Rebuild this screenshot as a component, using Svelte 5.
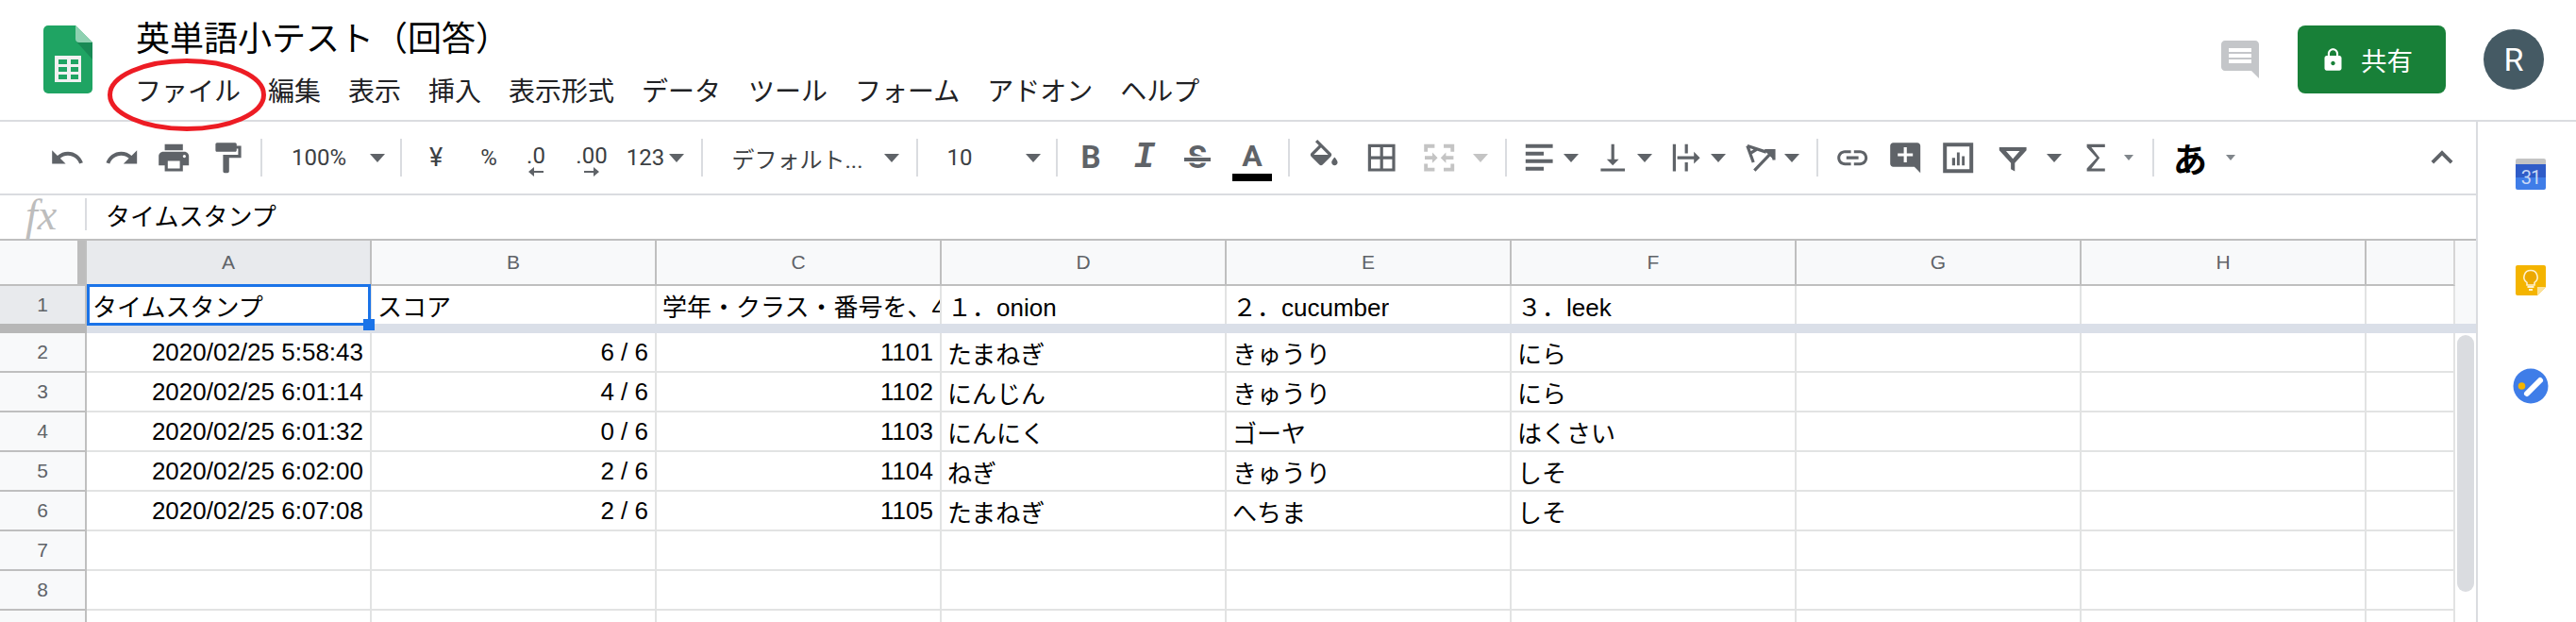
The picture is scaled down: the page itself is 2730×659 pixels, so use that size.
<svelte:options runes={true} />

<script lang="ts">
  const paths = {
    undo: 'M12.5 8c-2.65 0-5.05.99-6.9 2.6L2 7v9h9l-3.62-3.62c1.39-1.16 3.16-1.88 5.12-1.88 3.54 0 6.55 2.31 7.6 5.5l2.37-.78C21.08 11.03 17.15 8 12.5 8z',
    redo: 'M18.4 10.6C16.55 8.99 14.15 8 11.5 8c-4.65 0-8.58 3.03-9.96 7.22L3.9 16c1.05-3.19 4.05-5.5 7.6-5.5 1.95 0 3.73.72 5.12 1.88L13 16h9V7l-3.6 3.6z',
    print: 'M19 8H5c-1.66 0-3 1.34-3 3v6h4v4h12v-4h4v-6c0-1.66-1.34-3-3-3zm-3 11H8v-5h8v5zm3-7c-.55 0-1-.45-1-1s.45-1 1-1 1 .45 1 1-.45 1-1 1zm-1-9H6v4h12V3z',
    paint: 'M18 4V3c0-.55-.45-1-1-1H5c-.55 0-1 .45-1 1v4c0 .55.45 1 1 1h12c.55 0 1-.45 1-1V6h1v4H9v11c0 .55.45 1 1 1h2c.55 0 1-.45 1-1v-9h8V4h-3z',
    fill: 'M16.56 8.94L7.62 0 6.21 1.41l2.38 2.38-5.15 5.15c-.59.59-.59 1.54 0 2.12l5.5 5.5c.29.29.68.44 1.06.44s.77-.15 1.06-.44l5.5-5.5c.59-.58.59-1.53 0-2.12zM5.21 10L10 5.21 14.79 10H5.21zM19 11.5s-2 2.17-2 3.5c0 1.1.9 2 2 2s2-.9 2-2c0-1.33-2-3.5-2-3.5z',
    borders: 'M3 3v18h18V3H3zm8 16H5v-6h6v6zm0-8H5V5h6v6zm8 8h-6v-6h6v6zm0-8h-6V5h6v6z',
    merge: 'M2 3h7v2.400H4.400V8H2zM22 3h-7v2.400h4.600V8H22zM2 21h7v-2.400H4.400V16H2zM22 21h-7v-2.400h4.600V16H22zM2.500 10.800h5V8.500l3.500 3.500-3.500 3.500v-2.300h-5zM21.500 10.800h-5V8.500L13 12l3.500 3.500v-2.300h5z',
    halign: 'M3 3h18v2.500H3zM3 8h12v2.500H3zM3 13h18v2.500H3zM3 18h12v2.500H3z',
    valign: 'M16 13h-3V3h-2v10H8l4 4 4-4zM4 19v2h16v-2H4z',
    wrap: 'M3 3h2v18H3zM11 3h2v6h-2zM11 15h2v6h-2zM6 11h11V8l4 4-4 4v-3H6z',
    link: 'M3.900 12c0-1.710 1.390-3.100 3.100-3.100h4V7H7c-2.760 0-5 2.240-5 5s2.240 5 5 5h4v-1.900H7c-1.710 0-3.100-1.390-3.100-3.100zM8 13h8v-2H8v2zm9-6h-4v1.900h4c1.710 0 3.100 1.390 3.100 3.100s-1.390 3.100-3.100 3.100h-4V17h4c2.760 0 5-2.240 5-5s-2.240-5-5-5z',
    comment: 'M21.990 4c0-1.100-.890-2-1.990-2H4c-1.100 0-2 .900-2 2v12c0 1.100.900 2 2 2h14l4 4-.010-18zM17 11h-4v4h-2v-4H7V9h4V5h2v4h4v2z',
    chart: 'M2 2h20v20H2zM4.500 4.500v15h15v-15zM8 12h2v5H8zM11.200 8.500h1.800V17h-1.800zM14.500 11h1.800v6h-1.800z',
    filter: 'M3 5h18v2L13.300 15.500V21L10.700 19.500V15.500L3 7zM7.500 7.500L12 12.700 16.500 7.500z',
    sigma: 'M18 3H6v2l6.500 7L6 19v2h12v-2H9l5.500-7L9 5h9z',
    chevron: 'M12 8l-6 6 1.410 1.410L12 10.830l4.590 4.580L18 14z'
  };

  const raw = [
    { k: 'icon', d: 'undo', at: 71, w: 38 },
    { k: 'icon', d: 'redo', at: 129, w: 38 },
    { k: 'icon', d: 'print', at: 184, w: 38 },
    { k: 'icon', d: 'paint', at: 241, w: 38 },
    { k: 'sep', at: 277, w: 2 },
    { k: 'text', t: '100%', at: 338, w: 60 },
    { k: 'caret', at: 400, w: 16 },
    { k: 'sep', at: 425, w: 2 },
    { k: 'text', t: '¥', at: 462, w: 24, cls: 'big' },
    { k: 'text', t: '%', at: 518, w: 24 },
    { k: 'dec', t: '.0', at: 568, w: 40, dir: 'l' },
    { k: 'dec', t: '.00', at: 627, w: 40, dir: 'r' },
    { k: 'text', t: '123', at: 684, w: 40 },
    { k: 'caret', at: 717, w: 16 },
    { k: 'sep', at: 744, w: 2 },
    { k: 'text', t: 'デフォルト...', at: 845, w: 140 },
    { k: 'caret', at: 945, w: 16 },
    { k: 'sep', at: 972, w: 2 },
    { k: 'text', t: '10', at: 1017, w: 30 },
    { k: 'caret', at: 1095, w: 16 },
    { k: 'sep', at: 1120, w: 2 },
    { k: 'fmt', t: 'B', at: 1156, w: 30, cls: 'bold' },
    { k: 'fmt', t: 'I', at: 1213, w: 30, cls: 'ital' },
    { k: 'fmt', t: 'S', at: 1269, w: 30, cls: 'bold strike' },
    { k: 'color', t: 'A', at: 1327, w: 42 },
    { k: 'sep', at: 1366, w: 2 },
    { k: 'icon', d: 'fill', at: 1403, w: 38 },
    { k: 'icon', d: 'borders', at: 1464, w: 38 },
    { k: 'icon', d: 'merge', at: 1525, w: 38, off: true },
    { k: 'caret', at: 1569, w: 16, off: true },
    { k: 'sep', at: 1596, w: 2 },
    { k: 'icon', d: 'halign', at: 1631, w: 38 },
    { k: 'caret', at: 1665, w: 16 },
    { k: 'icon', d: 'valign', at: 1709, w: 38 },
    { k: 'caret', at: 1743, w: 16 },
    { k: 'icon', d: 'wrap', at: 1787, w: 38 },
    { k: 'caret', at: 1821, w: 16 },
    { k: 'rotate', at: 1866, w: 38 },
    { k: 'caret', at: 1899, w: 16 },
    { k: 'sep', at: 1926, w: 2 },
    { k: 'icon', d: 'link', at: 1963, w: 38 },
    { k: 'icon', d: 'comment', at: 2019, w: 38 },
    { k: 'icon', d: 'chart', at: 2075, w: 38 },
    { k: 'icon', d: 'filter', at: 2133, w: 38 },
    { k: 'caret', at: 2177, w: 16 },
    { k: 'icon', d: 'sigma', at: 2221, w: 38 },
    { k: 'caret', at: 2256, w: 10, small: true },
    { k: 'sep', at: 2282, w: 2 },
    { k: 'text', t: 'あ', at: 2321, w: 38, cls: 'kana' },
    { k: 'caret', at: 2364, w: 10, small: true },
    { k: 'icon', d: 'chevron', at: 2588, w: 46 }
  ];

  // gap before each item follows from its centre and the previous item's right edge
  let edge = 0;
  const items = raw.map((it) => {
    const left = it.at - it.w / 2;
    const gap = left - edge;
    edge = left + it.w;
    return { ...it, gap };
  });

  const menus = ['ファイル', '編集', '表示', '挿入', '表示形式', 'データ', 'ツール', 'フォーム', 'アドオン', 'ヘルプ'];
  const cols = ['A', 'B', 'C', 'D', 'E', 'F', 'G', 'H', ''];
  const head = ['タイムスタンプ', 'スコア', '学年・クラス・番号を、4桁の半角数字で入力してください', '１．onion', '２．cucumber', '３．leek', '', '', ''];
  const rows = [
    ['2020/02/25 5:58:43', '6 / 6', '1101', 'たまねぎ', 'きゅうり', 'にら'],
    ['2020/02/25 6:01:14', '4 / 6', '1102', 'にんじん', 'きゅうり', 'にら'],
    ['2020/02/25 6:01:32', '0 / 6', '1103', 'にんにく', 'ゴーヤ', 'はくさい'],
    ['2020/02/25 6:02:00', '2 / 6', '1104', 'ねぎ', 'きゅうり', 'しそ'],
    ['2020/02/25 6:07:08', '2 / 6', '1105', 'たまねぎ', 'へちま', 'しそ'],
    ['', '', '', '', '', ''],
    ['', '', '', '', '', ''],
    ['', '', '', '', '', '']
  ];
</script>

<div class="app">
  <header class="top">
    <svg class="logo" viewBox="0 0 52 72">
      <path d="M5 0h29l18 18v49a5 5 0 0 1-5 5H5a5 5 0 0 1-5-5V5a5 5 0 0 1 5-5z" fill="#1fa463" />
      <path d="M34 16l18 20V18z" fill="#188a55" />
      <path d="M34 0l18 18H38a4 4 0 0 1-4-4z" fill="#8ed1b1" />
      <path d="M12 32h28v28H12z" fill="#f1f1f1" />
      <path d="M16 36h9v5h-9zM29 36h8v5h-8zM16 44h9v5h-9zM29 44h8v5h-8zM16 52h9v5h-9zM29 52h8v5h-8z" fill="#1fa463" />
    </svg>
    <div class="titles">
      <div class="title">英単語小テスト（回答）</div>
      <nav class="menu">
        {#each menus as m}
          <span>{m}</span>
        {/each}
      </nav>
    </div>
    <div class="actions">
      <svg class="notes" viewBox="0 0 24 24"><path d="M20 2H4c-1.100 0-2 .900-2 2v12c0 1.100.900 2 2 2h14l4 4V4c0-1.100-.900-2-2-2zm-2 12H6v-2h12v2zm0-3H6V9h12v2zm0-3H6V6h12v2z" /></svg>
      <button class="share">
        <svg viewBox="0 0 24 24"><path d="M18 8h-1V6c0-2.760-2.240-5-5-5S7 3.240 7 6v2H6c-1.100 0-2 .900-2 2v10c0 1.100.900 2 2 2h12c1.100 0 2-.900 2-2V10c0-1.100-.900-2-2-2zm-6 9c-1.100 0-2-.900-2-2s.900-2 2-2 2 .900 2 2-.900 2-2 2zm3.100-9H8.900V6c0-1.710 1.390-3.100 3.100-3.100 1.710 0 3.100 1.390 3.100 3.100v2z" /></svg>
        共有
      </button>
      <div class="avatar">R</div>
    </div>
  </header>

  <div class="body">
    <div class="work">
      <div class="toolbar">
        {#each items as it}
          <div class="slot" style="margin-left:{it.gap}px;width:{it.w}px">
            {#if it.k === 'icon'}
              <svg class="ico" class:off={it.off} class:wide={it.d === 'chevron'} viewBox="0 0 24 24"><path fill-rule="evenodd" d={paths[it.d]} /></svg>
            {:else if it.k === 'rotate'}
              <svg class="ico" viewBox="0 0 24 24" fill="none" stroke="#5f6368" stroke-width="2">
                <path d="M3 4l4 11M3 4l12.500 4.200M4.800 9.200L9.800 6" />
                <path d="M7.700 20.400L19.500 8M14.500 7.300H20.600V13.500" />
              </svg>
            {:else if it.k === 'sep'}
              <div class="sep"></div>
            {:else if it.k === 'caret'}
              <div class="caret" class:off={it.off} class:small={it.small}></div>
            {:else if it.k === 'text'}
              <span class="txt {it.cls ?? ''}">{it.t}</span>
            {:else if it.k === 'dec'}
              <div class="dec">
                <span>{it.t}</span>
                <svg viewBox="0 0 16 10"><path d={it.dir === 'l' ? 'M6 0v4h10v2H6v4L0 5z' : 'M10 0v4H0v2h10v4l6-5z'} /></svg>
              </div>
            {:else if it.k === 'fmt'}
              <span class="fmt {it.cls}">{it.t}</span>
            {:else if it.k === 'color'}
              <div class="textcolor">
                <span>{it.t}</span>
                <i></i>
              </div>
            {/if}
          </div>
        {/each}
      </div>

      <div class="formula">
        <span class="fx">fx</span>
        <span class="fdiv"></span>
        <span class="ftext">タイムスタンプ</span>
      </div>

      <div class="sheet">
        <div class="grid">
          <div class="corner"><i></i></div>
          {#each cols as c, i}
            <div class="colhead" class:sel={i === 0}>{c}</div>
          {/each}

          <div class="rowhead sel row1">1</div>
          {#each head as h, i}
            <div class="cell row1">
              <span class="clip">{h}</span>
              {#if i === 0}
                <div class="selection"><b></b></div>
              {/if}
            </div>
          {/each}

          <div class="freeze-h"></div>
          <div class="freeze"></div>

          {#each rows as r, n}
            <div class="rowhead">{n + 2}</div>
            {#each r as v, i}
              <div class="cell" class:num={i < 3}><span class="clip">{v}</span></div>
            {/each}
            <div class="cell"></div>
            <div class="cell"></div>
            <div class="cell"></div>
          {/each}
        </div>
        <div class="rail">
          <div class="rail-top"></div>
          <div class="rail-freeze"></div>
          <div class="thumb"></div>
        </div>
      </div>
    </div>

    <aside class="side">
      <div class="cal">
        <span>31</span>
      </div>
      <svg class="keep" viewBox="0 0 32 32">
        <path d="M2 0h28a2 2 0 0 1 2 2v21l-9 9H2a2 2 0 0 1-2-2V2a2 2 0 0 1 2-2z" fill="#f4b400" />
        <path d="M32 23h-9v9z" fill="#fbe29a" />
        <path d="M16 5.500a7 7 0 0 0-4 12.800V21h8v-2.700a7 7 0 0 0-4-12.800z" fill="#eca800" stroke="#fdf1cf" stroke-width="1.600" />
        <path d="M12.500 23h7M14 26h4" stroke="#fdf1cf" stroke-width="2" />
      </svg>
      <svg class="tasks" viewBox="0 0 38 38">
        <circle cx="19" cy="19" r="18.500" fill="#3f7de8" />
        <circle cx="9.500" cy="19" r="3.800" fill="#f4b400" />
        <path d="M15 27L29 13" stroke="#fff" stroke-width="6" stroke-linecap="round" />
      </svg>
    </aside>
  </div>

  <svg class="mark" viewBox="0 0 172 81">
    <ellipse cx="86" cy="40.500" rx="81.500" ry="36" fill="none" stroke="#ed1c24" stroke-width="5" />
  </svg>
</div>

<style>
  :global(body) { margin: 0; background: #fff; overflow: hidden; }

  .app {
    position: relative; width: 2730px; height: 659px; overflow: hidden; background: #fff; color: #000;
    font-family: "Liberation Sans", "Noto Sans CJK JP", sans-serif; font-size: 26px;
  }

  .top {
    display: flex; align-items: flex-start; height: 127px; padding-left: 46px;
    border-bottom: 2px solid #dadce0;
  }
  .logo { width: 52px; height: 72px; margin-top: 27px; flex: none; }
  .titles { margin-left: 45px; padding-top: 18px; }
  .title { font-size: 36px; line-height: 48px; margin-left: 1px; }
  .menu { display: flex; gap: 29px; margin-top: 14px; font-size: 28px; line-height: 36px; color: #202124; }

  .actions { display: flex; align-items: center; margin-left: auto; padding-right: 34px; height: 126px; }
  .notes { width: 48px; height: 48px; fill: #c4c6c9; }
  .share {
    display: flex; align-items: center; gap: 16px; width: 157px; height: 72px; margin-left: 37px; padding: 0 0 0 24px;
    border: 0; border-radius: 8px; background: #188038; color: #fff; font: inherit; font-size: 27.500px;
  }
  .share svg { width: 27px; height: 27px; fill: #fff; }
  .avatar {
    display: flex; align-items: center; justify-content: center; width: 64px; height: 64px; margin-left: 40px;
    border-radius: 50%; background: #455a64; color: #fff; font-family: Roboto, sans-serif; font-size: 34px;
  }

  .body { display: flex; height: 530px; }
  .work { width: 2624px; flex: none; }
  .side {
    display: flex; flex-direction: column; align-items: center; flex: 1; padding: 39px 0 0 8px;
    border-left: 2px solid #dadce0;
  }

  .toolbar { display: flex; align-items: center; height: 76px; border-bottom: 2px solid #dadce0; }
  .slot { display: flex; align-items: center; justify-content: center; flex: none; height: 76px; }
  .ico { width: 38.400px; height: 38.400px; flex: none; fill: #5f6368; }
  .ico.off { fill: #c4c4c4; }
  .ico.wide { width: 46px; height: 46px; }
  .sep { width: 2px; height: 40px; background: #dadce0; }
  .caret { width: 0; height: 0; border: 8px solid transparent; border-top: 9px solid #5f6368; border-bottom: 0; }
  .caret.off { border-top-color: #c4c4c4; }
  .caret.small { border-width: 6px 5px 0; border-top-color: #80868b; }
  .txt { font-family: Roboto, "Noto Sans CJK JP", sans-serif; font-size: 24px; color: #3c4043; white-space: nowrap; }
  .txt.big { font-size: 27px; }
  .txt.kana { font-size: 36px; color: #000; font-weight: 700; }
  .dec { display: flex; flex-direction: column; align-items: center; font-family: Roboto, sans-serif; font-size: 24px; color: #3c4043; line-height: 24px; margin-top: 6px; }
  .dec svg { width: 16px; height: 10px; fill: #5f6368; }
  .fmt { position: relative; color: #5f6368; font-family: Roboto, sans-serif; font-size: 33px; line-height: 36px; }
  .fmt.bold { font-weight: 700; }
  .fmt.ital { font-family: "Liberation Mono", monospace; font-style: italic; font-weight: 700; font-size: 38px; }
  .fmt.strike::after { content: ""; position: absolute; left: -4px; right: -4px; top: 18px; height: 4px; background: #5f6368; box-shadow: 0 1.500px 0 #fff, 0 -1.500px 0 #fff; }
  .textcolor { display: flex; flex-direction: column; align-items: center; margin-top: 6px; color: #5f6368; font-family: Roboto, sans-serif; font-weight: 700; font-size: 32px; line-height: 32px; }
  .textcolor i { display: block; width: 42px; height: 8px; margin-top: 3px; background: #000; }

  .formula { display: flex; align-items: center; height: 46px; border-bottom: 2px solid #bfbfbf; }
  .fx { width: 90px; padding-left: 27px; box-sizing: border-box; font-family: "Liberation Serif", serif; font-style: italic; font-size: 46px; color: #bdbdbd; line-height: 46px; margin-top: -4px; }
  .fdiv { width: 2px; height: 34px; margin-top: -6px; background: #dadce0; }
  .ftext { margin: -6px 0 0 20px; }

  .sheet { display: flex; }
  .grid { display: grid; grid-template-columns: 92px repeat(8, 302px) 94px; width: 2602px; flex: none; }
  .corner { position: relative; height: 48px; background: #f8f9fa; box-sizing: border-box; border-bottom: 2px solid #bfbfbf; border-right: 2px solid #bfbfbf; }
  .corner i { position: absolute; right: 0; top: 0; bottom: 0; width: 8px; background: #bdbdbd; }
  .colhead {
    display: flex; align-items: center; justify-content: center; height: 48px; box-sizing: border-box;
    background: #f8f9fa; border-right: 2px solid #bfbfbf; border-bottom: 2px solid #bfbfbf;
    color: #5f6368; font-size: 21px;
  }
  .colhead:nth-child(10) { border-right-color: #d5d5d5; }
  .colhead.sel { background: #e8eaed; }
  .rowhead {
    display: flex; align-items: center; justify-content: center; height: 42px; box-sizing: border-box;
    background: #f8f9fa; border-right: 2px solid #bfbfbf; border-bottom: 2px solid #bfbfbf;
    color: #5f6368; font-size: 21px;
  }
  .rowhead.sel { background: #e8eaed; }
  .row1 { height: 40px; border-bottom: 0; }
  .cell {
    position: relative; display: flex; align-items: center; height: 42px; padding: 0 7px 0 6px; box-sizing: border-box;
    border-right: 2px solid #e2e3e3; border-bottom: 2px solid #e2e3e3; min-width: 0;
  }
  .cell.row1 { height: 40px; border-bottom: 0; padding-right: 0; }
  .cell.num { justify-content: flex-end; }
  .clip { overflow: hidden; white-space: nowrap; }
  .selection { position: absolute; left: 0; right: -1px; top: -2px; bottom: -2px; border: 3.500px solid #1a73e8; z-index: 2; }
  .selection b { position: absolute; right: -7px; bottom: -8px; width: 12px; height: 12px; background: #1a73e8; }
  .freeze-h { height: 10px; background: #b7b7b7; }
  .freeze { height: 10px; grid-column: 2 / -1; background: #dadfe8; }

  .rail { width: 22px; flex: none; }
  .rail-top { height: 88px; background: #f8f9fa; }
  .rail-freeze { height: 10px; background: #dadfe8; }
  .thumb { width: 18px; height: 272px; margin: 2px 0 0 2px; border-radius: 9px; background: #dadce0; }

  .cal {
    display: flex; align-items: center; justify-content: center; width: 32px; height: 33px; box-sizing: border-box; padding-top: 6px;
    border-radius: 2px; border-top: 6px solid #c4c4c4;
    background: linear-gradient(#2f5cc8 0 50%, #3f7de8 50%); color: #c9d8f6;
    font-family: Roboto, sans-serif; font-size: 20px; letter-spacing: -1px;
  }
  .cal span { margin-top: -6px; }
  .keep { width: 32px; height: 32px; margin-top: 80px; }
  .tasks { width: 38px; height: 38px; margin-top: 77px; }

  .mark { position: absolute; left: 112px; top: 60px; width: 172px; height: 81px; pointer-events: none; }
</style>
